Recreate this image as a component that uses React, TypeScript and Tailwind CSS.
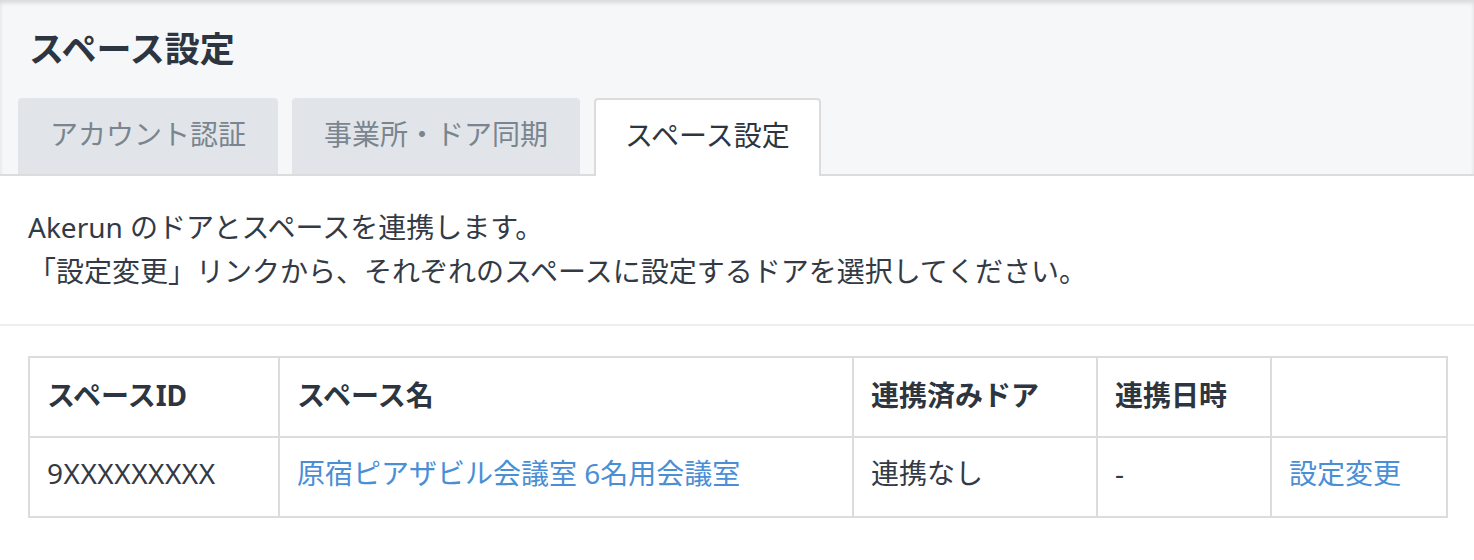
const tabs = [
  { label: "アカウント認証", active: false },
  { label: "事業所・ドア同期", active: false },
  { label: "スペース設定", active: true },
];

const columns = [
  { label: "スペースID", width: "w-[250px]" },
  { label: "スペース名", width: "w-[574px]" },
  { label: "連携済みドア", width: "w-[244px]" },
  { label: "連携日時", width: "w-[174px]" },
  { label: "", width: "" },
];

export default function App() {
  return (
    <div
      className="min-h-[560px] bg-white text-[#333a45]"
      style={{ fontFamily: '"Noto Sans", "Noto Sans CJK JP", sans-serif' }}
    >
      {/* Header + tabs */}
      <div className="bg-[#f6f7f9] shadow-[inset_0_3px_4px_rgba(0,0,0,0.12)]">
        <h1 className="px-[29px] pt-[24px] text-[35px] font-bold leading-[50px] text-[#2c3540]">
          スペース設定
        </h1>
        <div className="mt-[24px] flex items-end gap-[14px] border-b-2 border-[#dcdcdc] pl-[18px]">
          {tabs.map((tab) =>
            tab.active ? (
              <div
                key={tab.label}
                className="-mb-[2px] flex h-[78px] items-center rounded-t-[4px] border-2 border-b-0 border-[#dcdcdc] bg-white px-[29px] pb-[6px] text-[28px] text-[#2c3540]"
              >
                {tab.label}
              </div>
            ) : (
              <div
                key={tab.label}
                className="flex h-[76px] items-center rounded-t-[4px] bg-[#e1e5e9] px-[32px] pb-[4px] text-[28px] text-[#7a858f]"
              >
                {tab.label}
              </div>
            )
          )}
        </div>
      </div>

      {/* Description */}
      <div className="border-b-2 border-[#eeeeee] px-[28px] pt-[29px] pb-[31px] text-[28px] leading-[44px]">
        <p>Akerun のドアとスペースを連携します。</p>
        <p>「設定変更」リンクから、それぞれのスペースに設定するドアを選択してください。</p>
      </div>

      {/* Table */}
      <div className="px-[28px] pt-[30px] pb-[44px]">
        <table className="w-[1420px] table-fixed border-collapse border-2 border-[#dcdcdc] text-[28px]">
          <thead>
            <tr className="h-[80px]">
              {columns.map((col, i) => (
                <th
                  key={i}
                  className={`${col.width} border-2 border-[#dcdcdc] px-[17px] pb-[4px] text-left font-bold text-[#2c3540]`}
                >
                  {col.label}
                </th>
              ))}
            </tr>
          </thead>
          <tbody>
            <tr className="h-[80px]">
              <td className="border-2 border-[#dcdcdc] px-[17px] pb-[8px] tracking-[0.5px]">9XXXXXXXXX</td>
              <td className="border-2 border-[#dcdcdc] px-[17px] pb-[8px]">
                <a href="#" className="text-[#4a8fd6]">
                  原宿ピアザビル会議室 6名用会議室
                </a>
              </td>
              <td className="border-2 border-[#dcdcdc] px-[17px] pb-[8px]">連携なし</td>
              <td className="border-2 border-[#dcdcdc] px-[17px] pb-[8px]">-</td>
              <td className="border-2 border-[#dcdcdc] px-[17px] pb-[8px]">
                <a href="#" className="text-[#4a8fd6]">
                  設定変更
                </a>
              </td>
            </tr>
          </tbody>
        </table>
      </div>
    </div>
  );
}
